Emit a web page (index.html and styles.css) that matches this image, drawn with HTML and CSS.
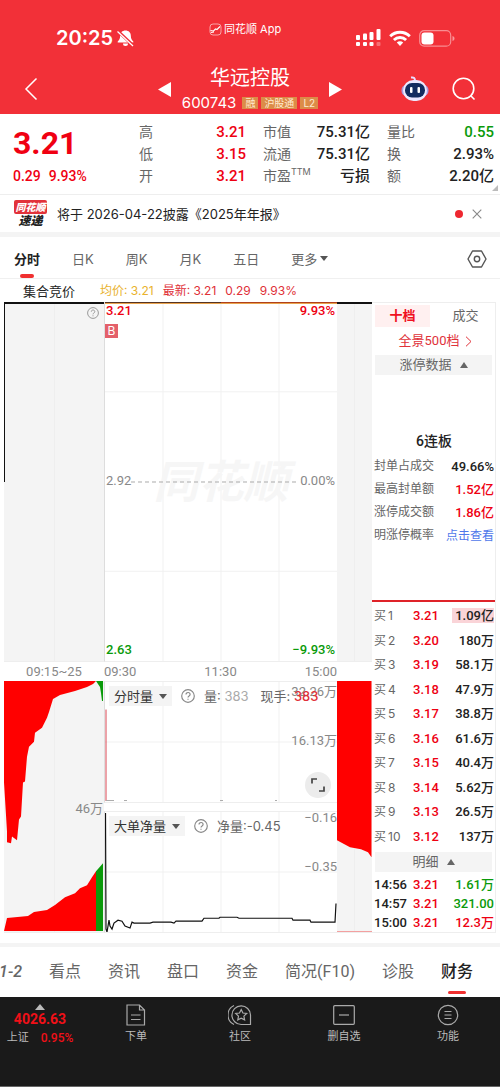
FILE: index.html
```html
<!DOCTYPE html>
<html lang="zh-CN">
<head>
<meta charset="utf-8">
<meta name="viewport" content="width=device-width, initial-scale=1">
<title>华远控股 600743</title>
<link rel="stylesheet" href="styles.css">
</head>
<body>
<header class="top">
  <div class="status">
    <div class="clock">20:25
      <svg width="19" height="19" viewBox="0 0 19 19"><path d="M9.500 1.500c-3.300 0-5.300 2.200-5.300 5 0 3.500-1.200 4.700-2.500 6v.9h15.600v-.9c-1.300-1.300-2.500-2.500-2.500-6 0-2.800-2-5-5.300-5zM7 14.500h5a2.500 2.500 0 0 1-5 0z" fill="#fff"/><path d="M1.800 2.200l15 14" stroke="#f23038" stroke-width="3"/><path d="M1.500 2.500l15.500 14.500" stroke="#fff" stroke-width="1.300"/></svg>
    </div>
    <div class="app-name">
      <svg width="13" height="13" viewBox="0 0 13 13" fill="none" stroke="#fff"><rect x="1" y="1" width="11" height="11" rx="3" stroke-width=".8" opacity=".7"/><path d="M1.500 7.500l3 .5 2-2 1.500.5 3-3M2 9.500l3-.5" stroke-width="1.100"/></svg>
      同花顺 App
    </div>
    <div class="signals">
      <svg width="26" height="18" viewBox="0 0 26 18" fill="#fff"><rect x="1" y="6" width="4" height="5" rx="1"/><rect x="8" y="4.500" width="4" height="6.500" rx="1"/><rect x="14.500" y="3" width="4" height="8" rx="1"/><rect x="21.500" y="0" width="4" height="11" rx="1"/><rect x="1" y="13" width="4" height="4" rx="1"/><rect x="8" y="13" width="4" height="4" rx="1"/><rect x="14.500" y="13" width="4" height="4" rx="1"/><rect x="21.500" y="13" width="4" height="4" rx="1" opacity=".3"/></svg>
      <svg width="22" height="17" viewBox="0 0 22 17" fill="none" stroke="#fff" stroke-width="2.900"><path d="M1.200 6.300a14 14 0 0 1 19.600 0"/><path d="M4.900 10a8.800 8.800 0 0 1 12.200 0"/><path d="M11 16l-3.200-3.400a4.600 4.600 0 0 1 6.400 0z" fill="#fff" stroke="none"/></svg>
      <svg width="36" height="17" viewBox="0 0 36 17"><rect x=".7" y=".7" width="31" height="15.500" rx="4.500" fill="none" stroke="#fff" stroke-opacity=".45" stroke-width="1.200"/><rect x="2.500" y="2.500" width="12" height="12" rx="3" fill="#fff"/><path d="M33.500 6v5c1.500-.5 2-1.500 2-2.500s-.5-2-2-2.500z" fill="#fff" opacity=".5"/></svg>
    </div>
  </div>
  <div class="title-row">
    <button class="icon-btn" aria-label="返回"><svg width="14" height="24" viewBox="0 0 14 24" fill="none" stroke="#fff" stroke-width="1.500"><path d="M12.500 1.500L2 12l10.500 10.500"/></svg></button>
    <div class="stock">
      <button class="icon-btn" aria-label="上一只"><svg width="13" height="15" viewBox="0 0 13 15"><path d="M0 7.500L13 0v15z" fill="#fff"/></svg></button>
      <div class="stock-name">
        <h1>华远控股</h1>
        <div class="code">600743<span class="tag">融</span><span class="tag">沪股通</span><span class="tag">L2</span></div>
      </div>
      <button class="icon-btn" aria-label="下一只"><svg width="13" height="15" viewBox="0 0 13 15"><path d="M13 7.500L0 0v15z" fill="#fff"/></svg></button>
    </div>
    <div class="actions">
      <button class="icon-btn" aria-label="智能助手"><svg width="28" height="26" viewBox="0 0 28 26"><path d="M14 5c0-3-1-4-4-3.500" fill="none" stroke="#e9ddff" stroke-width="2"/><rect x=".5" y="9" width="27" height="11" rx="5" fill="#ad9de0"/><rect x="2" y="4" width="24" height="21" rx="10.500" fill="#ece8ff"/><rect x="4" y="7" width="20" height="14.500" rx="7" fill="#132c60"/><rect x="9" y="11" width="2.500" height="6" rx="1" fill="#fff"/><rect x="16.500" y="11" width="2.500" height="6" rx="1" fill="#fff"/></svg></button>
      <button class="icon-btn" aria-label="搜索"><svg width="24" height="24" viewBox="0 0 24 24" fill="none" stroke="#fff" stroke-width="1.600"><circle cx="11.500" cy="11.500" r="10.300"/><path d="M18.500 18.500l4 4"/></svg></button>
    </div>
  </div>
</header>

<main>
<section class="quote">
  <div class="price">
    <strong>3.21</strong>
    <div class="change"><span>0.29</span><span>9.93%</span></div>
  </div>
  <dl>
    <div><dt>高</dt><dd class="up">3.21</dd></div>
    <div><dt>低</dt><dd class="up">3.15</dd></div>
    <div><dt>开</dt><dd class="up">3.21</dd></div>
  </dl>
  <dl>
    <div><dt>市值</dt><dd>75.31亿</dd></div>
    <div><dt>流通</dt><dd>75.31亿</dd></div>
    <div><dt>市盈<sup>TTM</sup></dt><dd>亏损</dd></div>
  </dl>
  <dl>
    <div><dt>量比</dt><dd class="down">0.55</dd></div>
    <div><dt>换</dt><dd>2.93%</dd></div>
    <div><dt>额</dt><dd>2.20亿</dd></div>
  </dl>
  <svg class="corner" width="6" height="6" viewBox="0 0 6 6"><path d="M6 0v6H0z" fill="#bbb"/></svg>
</section>

<section class="notice">
  <div class="express"><b>同花顺</b><i>速递</i></div>
  <a href="#report">将于 2026-04-22披露《2025年年报》</a>
  <span class="dot"></span>
  <button class="icon-btn" aria-label="关闭"><svg width="10" height="10" viewBox="0 0 10 10" stroke="#888" stroke-width="1.100"><path d="M.7.7l8.600 8.600M9.300.7L.7 9.300"/></svg></button>
</section>

<nav class="periods">
  <button class="on">分时</button><button>日K</button><button>周K</button><button>月K</button><button>五日</button><button>更多<span class="caret"></span></button>
  <button class="settings" aria-label="设置"><svg width="20" height="18" viewBox="0 0 20 18" fill="none" stroke="#555" stroke-width="1.400" stroke-linejoin="round"><path d="M5.500 1h9L19 9l-4.500 8h-9L1 9z"/><circle cx="10" cy="9" r="2.700"/></svg></button>
</nav>

<section class="board">
  <div class="legend">
    <span class="auction">集合竞价</span><span class="avg">均价: 3.21</span><span class="last">最新: 3.21</span><span class="last">0.29</span><span class="last">9.93%</span>
  </div>
  <div class="charts">
    <div class="pane side-pane auction-price">
      <svg class="help" width="12" height="12" viewBox="0 0 12 12" fill="none" stroke="#999"><circle cx="6" cy="6" r="5.400"/><path d="M4.300 4.700c0-2.300 3.500-2.200 3.500 0 0 1.300-1.800 1.200-1.800 2.600M6 8.300v1"/></svg>
    </div>
    <div class="pane price-pane">
      <svg class="plot" viewBox="0 0 232 360" preserveAspectRatio="none"><path d="M58 0v360M116 0v360M174 0v360M0 90h232M0 270h232" stroke="#f1f1f1" fill="none"/></svg>
      <span class="watermark">同花顺</span>
      <svg class="plot" viewBox="0 0 232 360" preserveAspectRatio="none"><path d="M0 .5h232" stroke="#513020"/><path d="M116 .5h116" stroke="#b4401c"/><path d="M0 1.500h232" stroke="#e9a24a"/><path d="M26 180.500h168" stroke="#aaa" stroke-dasharray="4 3"/></svg>
      <span class="lab tl up">3.21</span><span class="lab tr up">9.93%</span>
      <span class="mark">B</span>
      <span class="lab ml">2.92</span><span class="lab mr">0.00%</span>
      <span class="lab bl down">2.63</span><span class="lab br down">−9.93%</span>
    </div>
    <div class="pane side-pane close-price"></div>

    <div class="times auction-time">09:15~25</div>
    <div class="times session"><span>09:30</span><span>11:30</span><span>15:00</span></div>
    <div></div>

    <div class="pane side-pane">
      <svg class="plot" viewBox="0 0 100 252" preserveAspectRatio="none">
        <path fill="#f00" d="M0 0V102L3 151V162L7 163L8 156L13 160L15 139L17 136L19 102L21 101L23 76L25 66L30 61L31 52L38 47L43 37L45 31L49 18L56 14L71 10L83 6L89 3L92 0zM0 251L3 238L24 236L30 232L43 230L51 225L61 217L71 213L76 208L83 205L88 197L92 191V251z"/>
        <path fill="#0a9a0a" d="M92 0L96 6L97 12L98 20H99V0zM92 191L99 183V251H92z"/>
      </svg>
      <span class="lab auction-vol">46万</span>
    </div>
    <div class="indicators">
      <div class="pane sub">
        <svg class="plot" viewBox="0 0 232 122" preserveAspectRatio="none"><path d="M58 0v122M116 0v122M174 0v122M0 61h232" stroke="#f1f1f1" fill="none"/><path d="M1 28v93" stroke="#d84450"/><path d="M1 120.500h8M19 120.500h3M115 120.500h3M170 120.500h2" stroke="#aaa"/></svg>
        <span class="lab vol-max">32.26万</span><span class="lab mr">16.13万</span>
        <div class="sub-head">
          <button>分时量<span class="caret"></span></button>
          <svg width="14" height="14" viewBox="0 0 12 12" fill="none" stroke="#888"><circle cx="6" cy="6" r="5.400"/><path d="M4.300 4.700c0-2.300 3.500-2.200 3.500 0 0 1.300-1.800 1.200-1.800 2.600M6 8.300v1"/></svg>
          <span>量: <em>383</em></span><span class="hand">现手: <b>383</b></span>
        </div>
        <button class="expand" aria-label="全屏"><svg width="14" height="14" viewBox="0 0 14 14" fill="none" stroke="#444" stroke-width="1.700"><path d="M1 5.500V1h5M13 8.500V13H8"/></svg></button>
      </div>
      <div class="pane sub">
        <svg class="plot" viewBox="0 0 232 122" preserveAspectRatio="none"><path d="M58 0v122M116 0v122M174 0v122M0 61h232" stroke="#f1f1f1" fill="none"/><path fill="none" stroke="#111" stroke-width="1.200" d="M.5 1L1 119L2 122L4 110L5 116L7 119L9 113L13 110L17 111L20 116L25 118L27 112L29 113H45L48 112H66L69 113L71 111H97L99 108H114L115 107H132L134 108H187L188 110H205L206 112H230L231 93"/></svg>
        <span class="lab net-max">−0.16</span><span class="lab net-mid">−0.35</span>
        <div class="sub-head">
          <button>大单净量<span class="caret"></span></button>
          <svg width="14" height="14" viewBox="0 0 12 12" fill="none" stroke="#888"><circle cx="6" cy="6" r="5.400"/><path d="M4.300 4.700c0-2.300 3.500-2.200 3.500 0 0 1.300-1.800 1.200-1.800 2.600M6 8.300v1"/></svg>
          <span>净量:-0.45</span>
        </div>
      </div>
    </div>
    <div class="pane side-pane">
      <svg class="plot" viewBox="0 0 35 252" preserveAspectRatio="none"><path fill="#f00" d="M0 0H34.500V177L31 172L24 169L13 167L0 160z"/><path d="M0 251.500h35" stroke="#f3a0a0"/></svg>
    </div>
  </div>

  <aside class="depth">
    <div class="depth-tabs"><button class="on">十档</button><button>成交</button></div>
    <a class="full" href="#levels">全景500档 <svg width="7" height="11" viewBox="0 0 7 11" fill="none" stroke="#e0323a"><path d="M1 .7l5 4.800-5 4.800"/></svg></a>
    <button class="fold">涨停数据<span class="caret rise"></span></button>
    <div class="limit">
      <h2>6连板</h2>
      <dl>
        <div><dt>封单占成交</dt><dd>49.66%</dd></div>
        <div><dt>最高封单额</dt><dd class="up">1.52亿</dd></div>
        <div><dt>涨停成交额</dt><dd class="up">1.86亿</dd></div>
        <div><dt>明涨停概率</dt><dd><a href="#odds">点击查看</a></dd></div>
      </dl>
    </div>
    <table class="bids">
      <tr><th>买<span>1</span></th><td class="up">3.21</td><td><mark>1.09亿</mark></td></tr>
      <tr><th>买<span>2</span></th><td class="up">3.20</td><td>180万</td></tr>
      <tr><th>买<span>3</span></th><td class="up">3.19</td><td>58.1万</td></tr>
      <tr><th>买<span>4</span></th><td class="up">3.18</td><td>47.9万</td></tr>
      <tr><th>买<span>5</span></th><td class="up">3.17</td><td>38.8万</td></tr>
      <tr><th>买<span>6</span></th><td class="up">3.16</td><td>61.6万</td></tr>
      <tr><th>买<span>7</span></th><td class="up">3.15</td><td>40.4万</td></tr>
      <tr><th>买<span>8</span></th><td class="up">3.14</td><td>5.62万</td></tr>
      <tr><th>买<span>9</span></th><td class="up">3.13</td><td>26.5万</td></tr>
      <tr><th>买<span>10</span></th><td class="up">3.12</td><td>137万</td></tr>
    </table>
    <button class="fold">明细<span class="caret rise"></span></button>
    <table class="ticks">
      <tr><td>14:56</td><td class="up">3.21</td><td class="down">1.61万</td></tr>
      <tr><td>14:57</td><td class="up">3.21</td><td class="down">321.00</td></tr>
      <tr><td>15:00</td><td class="up">3.21</td><td class="up">12.3万</td></tr>
    </table>
  </aside>
</section>

<nav class="sections">
  <button class="l2">1-2</button><button>看点</button><button>资讯</button><button>盘口</button><button>资金</button><button>简况(F10)</button><button>诊股</button><button class="on">财务</button>
</nav>
</main>

<footer class="bottom">
  <div class="index">
    <svg width="10" height="6" viewBox="0 0 10 6"><path d="M5 0l5 6H0z" fill="#bbb"/></svg>
    <strong>4026.63</strong>
    <div><span>上证</span><b>0.95%</b></div>
  </div>
  <button><svg width="22" height="22" viewBox="0 0 22 22" fill="none" stroke="#aaa" stroke-width="1.200"><path d="M2 1h12.500l5 5v15H2zM14.500 1v5h5M6 11h9.500M6 15.500h9.500"/></svg>下单</button>
  <button><svg width="24" height="22" viewBox="0 0 24 22" fill="none" stroke="#aaa" stroke-width="1.200"><path d="M6 1.500a10.500 10.500 0 0 0 0 19"/><path d="M22.500 20.500v-9.500a9.300 9.300 0 1 0-9.300 9.500z"/><path d="M13.200 5.500l1.700 3.500 3.800.5-2.800 2.600.7 3.800-3.400-1.800-3.400 1.800.7-3.800-2.800-2.600 3.800-.5z"/></svg>社区</button>
  <button><svg width="22" height="22" viewBox="0 0 22 22" fill="none" stroke="#aaa" stroke-width="1.200"><rect x=".7" y="1.700" width="20.600" height="18.600" rx="1"/><path d="M6 11h10"/></svg>删自选</button>
  <button><svg width="22" height="22" viewBox="0 0 22 22" fill="none" stroke="#aaa" stroke-width="1.200"><circle cx="11" cy="11" r="9.700"/><path d="M7.500 7.500h7M7.500 11h7M7.500 14.500h7"/></svg>功能</button>
</footer>
</body>
</html>
```
FILE: styles.css
```css
* { box-sizing: border-box; }
body {
  margin: 0;
  min-height: 100vh;
  display: flex;
  flex-direction: column;
  background: #fff;
  color: #222;
  font: 14px/20px Inter, "Noto Sans CJK SC", sans-serif;
}
button { border: 0; padding: 0; background: none; font: inherit; color: inherit; white-space: nowrap; }
a { text-decoration: none; color: inherit; }
h1, h2, dl, dd { margin: 0; font-weight: 400; }
svg { flex: none; }
table { border-collapse: collapse; width: 100%; }
th, td { padding: 0; font-weight: 400; }
.icon-btn { display: flex; align-items: center; justify-content: center; }
.up { color: #ee0012; }
.down { color: #0a9a0a; }
.caret { display: inline-block; border: 4px solid transparent; border-top: 5px solid #555; border-bottom: 0; }
.caret.rise { border-top: 0; border-bottom: 6px solid #666; }

.top { background: #f23038; color: #fff; height: 114px; padding-top: 16px; }
.status { display: grid; grid-template-columns: 153px auto 1fr; padding: 0 45px 0 56px; height: 44px; }
.clock { display: flex; align-items: center; gap: 3px; font-size: 20px; font-weight: 600; }
.app-name { display: flex; align-items: center; gap: 2px; font-size: 11px; height: 26px; white-space: nowrap; }
.signals { display: flex; align-items: center; justify-content: flex-end; gap: 8px; }
.title-row { display: grid; grid-template-columns: 1fr auto 1fr; align-items: center; padding: 4px 24px 0; }
.title-row > .icon-btn { justify-self: start; }
.stock { display: flex; align-items: center; gap: 9px; }
.stock-name { display: flex; flex-direction: column; align-items: center; width: 140px; }
h1 { font-size: 20px; line-height: 28px; }
.code { display: flex; align-items: center; gap: 3px; font-size: 15px; line-height: 22px; white-space: nowrap; }
.tag { background: #dc8c48; color: #ffebd0; font-size: 10px; line-height: 12px; padding: 0 3px; }
.tag:first-of-type { margin-left: 3px; }
.actions { display: flex; justify-content: flex-end; align-items: center; gap: 23px; }

.quote {
  position: relative;
  display: grid;
  grid-template-columns: 109px repeat(3, 1fr);
  gap: 17px;
  padding: 7px 6px 7px 13px;
  border-bottom: 1px solid #eee;
}
.price { color: #f00012; font-family: Roboto, sans-serif; font-weight: 500; }
.price strong { display: block; font-size: 32px; line-height: 44px; font-weight: 700; }
.change { display: flex; gap: 8px; font-size: 14px; line-height: 22px; }
.quote dl div { display: flex; justify-content: space-between; line-height: 22px; }
.quote dt { color: #666; white-space: nowrap; }
.quote dd { font-family: Roboto, "Noto Sans CJK SC", sans-serif; font-size: 15px; font-weight: 500; white-space: nowrap; }
.quote sup { font-size: 9px; line-height: 9px; }
.corner { position: absolute; right: 2px; bottom: 3px; }

.notice { display: flex; align-items: center; height: 38px; padding: 0 18px 0 14px; border-bottom: 1px solid #f4f4f4; font-size: 13px; }
.notice a { flex: 1; margin-left: 10px; white-space: nowrap; }
.express { width: 33px; display: flex; flex-direction: column; align-items: center; line-height: 14px; }
.express b { background: #e2323a; color: #fff; width: 33px; border-radius: 2px; text-align: center; font-size: 10px; font-style: italic; font-weight: 900; line-height: 14px; }
.express i { font-size: 12px; font-weight: 900; }
.dot { width: 8px; height: 8px; border-radius: 50%; background: #ee2730; margin-right: 9px; }

.periods { display: flex; align-items: center; gap: 32px; height: 46px; padding: 2px 13px 0 14px; border-top: 4px solid #f4f4f4; border-bottom: 1px solid #f0f0f0; font-size: 13px; color: #666; }
.periods button { display: flex; align-items: center; gap: 3px; height: 38px; }
.periods .on { color: #222; font-weight: 700; }
.periods .settings { margin-left: auto; }
.on { position: relative; }
.periods .on::after, .sections .on::after { content: ""; position: absolute; left: 50%; bottom: 0; width: 14px; height: 4px; margin-left: -7px; border-radius: 2px; background: #f03030; }

.board { display: grid; grid-template-columns: 1fr 124px; padding: 0 4px 10px; }
.legend { grid-column: 1 / -1; display: flex; gap: 9px; height: 23px; align-items: center; font-size: 12px; white-space: nowrap; }
.auction { font-size: 13px; width: 68px; margin-left: 19px; }
.avg { color: #e9b22d; }
.last { color: #e03038; }
.charts { display: grid; grid-template-columns: 100px 1fr 35px; grid-template-rows: 360px 19px 252px; }
.pane { position: relative; min-width: 0; border-bottom: 1px solid #eee; }
.side-pane { background: linear-gradient(#eee, #eee) 50% 0 / 1px 100% no-repeat #f4f4f4; }
.auction-price::before { content: ""; position: absolute; left: 0; top: 0; height: 50%; border-left: 1px solid #111; }
.auction-price, .close-price { box-shadow: inset 0 2px #111; }
.help { position: absolute; right: 5px; top: 5px; }
.plot { position: absolute; inset: 0; width: 100%; height: 100%; }
.price-pane { border-left: 1px solid #ddd; }
.lab { position: absolute; font: 400 13px/16px Roboto, "Noto Sans CJK SC", sans-serif; white-space: nowrap; }
.lab:not(.up, .down) { color: #888; }
.lab.up, .lab.down { font-weight: 500; }
.tl, .ml, .bl { left: 1px; }
.tr, .mr, .br { right: 2px; }
.tl, .tr { top: 1px; }
.ml, .mr { top: calc(50% - 9px); }
.bl, .br { bottom: 3px; }
.sub .mr { right: 0; }
.mark { position: absolute; left: 0; top: 22px; width: 13px; background: #e4606a; color: #fff; text-align: center; font-size: 12px; line-height: 14px; }
.watermark { position: absolute; inset: 0; display: flex; align-items: center; justify-content: center; font-size: 45px; font-weight: 700; font-style: italic; color: #f6f6f6; }
.times { display: flex; align-items: center; font: 13px/19px Roboto, sans-serif; color: #888; }
.auction-time { justify-content: center; }
.session { justify-content: space-between; }
.auction-vol { right: 1px; top: 120px; }
.indicators { display: flex; flex-direction: column; justify-content: space-between; min-width: 0; }
.sub { height: 122px; border-left: 1px solid #ddd; border-top: 1px solid #eee; }
.vol-max { right: 0; top: 2px; }
.net-max { right: 0; top: -2px; }
.net-mid { right: 0; top: 47px; }
.sub-head { position: relative; display: flex; align-items: center; gap: 9px; padding: 4px 0 0 4px; font-size: 13px; color: #666; white-space: nowrap; }
.sub-head button { background: #f4f4f4; color: #333; padding: 0 5px; display: flex; align-items: center; gap: 6px; }
.sub-head em { font-style: normal; color: #aaa; }
.hand { margin-left: 3px; }
.hand b { color: #e03038; font-weight: 500; }
.expand { position: absolute; right: 6px; bottom: 4px; width: 26px; height: 26px; border-radius: 50%; background: #ececec; display: flex; align-items: center; justify-content: center; }

.depth { display: flex; flex-direction: column; border: 1px solid #eee; border-width: 1px 1px 1px 0; font-family: Roboto, "Noto Sans CJK SC", sans-serif; font-size: 13px; }
.depth-tabs { display: flex; gap: 8px; padding: 2px 2px 0 3px; line-height: 22px; color: #666; }
.depth-tabs button { flex: 1; }
.depth-tabs .on { background: #fff0f0; color: #f01020; font-weight: 700; }
.full { display: flex; align-items: center; justify-content: center; gap: 6px; height: 28px; color: #e0323a; padding-left: 4px; }
.fold { display: flex; align-items: center; justify-content: center; gap: 8px; margin: 0 3px; background: #f4f4f4; color: #666; line-height: 20px; }
.limit { height: 227px; padding: 54px 1px 0 2px; border-bottom: 2px solid #df2329; }
h2 { font-size: 14px; line-height: 24px; font-weight: 500; text-align: center; }
.limit dl { padding-top: 2px; }
.limit dl div { display: flex; justify-content: space-between; line-height: 23px; white-space: nowrap; }
.limit dt { font-size: 12px; color: #666; }
.limit dd { font-size: 13px; font-weight: 500; }
.limit a { font-size: 12px; color: #4f78ea; font-weight: 400; }
.bids { flex: 1; display: flex; padding: 0 1px 0 2px; }
.bids tbody { flex: 1; display: flex; flex-direction: column; padding: 2px 0 3px; }
.bids tr { flex: 1; display: grid; grid-template-columns: 39px 1fr auto; align-items: center; }
.bids th { display: flex; gap: 2px; color: #666; font: 12px/18px Inter, "Noto Sans CJK SC", sans-serif; }
.bids td, .ticks td { font-weight: 500; font-size: 13px; }
mark { background: #fad4d8; color: inherit; padding: 0 0 0 3px; }
.ticks { margin: 3px 1px 0 2px; width: auto; }
.ticks tr { line-height: 19px; }
.ticks td:first-child { width: 39px; }
.ticks td:last-child { text-align: right; }

.sections { display: flex; justify-content: flex-end; gap: 27px; height: 54px; padding: 0 27px 0 0; border-top: 4px solid #f4f4f4; overflow: hidden; font-family: Roboto, "Noto Sans CJK SC", sans-serif; font-size: 16px; color: #666; }
.sections button { flex: none; height: 50px; }
.sections .on { color: #222; font-weight: 500; }
.sections .on::after { width: 18px; margin-left: -9px; height: 3px; bottom: 3px; }
.sections .l2 { font-style: italic; font-weight: 500; }

.bottom { flex: 1; display: grid; grid-template-columns: 84px repeat(4, 1fr); background: #1a1a1a; color: #bbb; padding-top: 7px; border-bottom: 1px solid #666; align-items: start; font-size: 11px; line-height: 16px; }
.bottom button { display: flex; flex-direction: column; align-items: center; gap: 2px; }
.index { display: flex; flex-direction: column; align-items: center; padding-right: 4px; font-family: Roboto, "Noto Sans CJK SC", sans-serif; }
.index strong { font-size: 14px; line-height: 19px; color: #f01018; font-weight: 700; }
.index div { display: flex; gap: 12px; line-height: 18px; white-space: nowrap; }
.index b { font-size: 12px; font-weight: 500; color: #f01018; }
```
